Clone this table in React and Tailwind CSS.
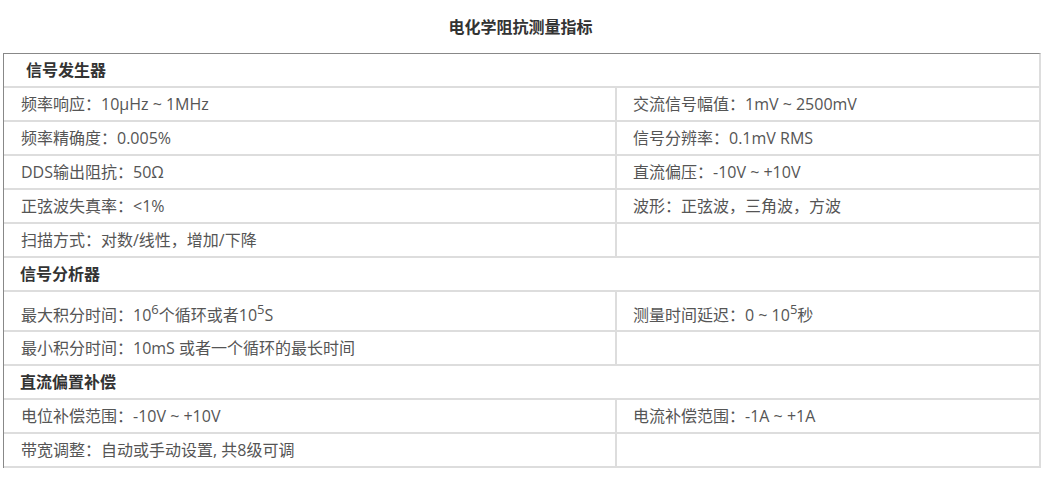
const font = { fontFamily: "'Open Sans', 'Noto Sans CJK SC', sans-serif" };

const rows = [
  { head: "信号发生器", indent: true },
  { left: "频率响应：10μHz ~ 1MHz", right: "交流信号幅值：1mV ~ 2500mV" },
  { left: "频率精确度：0.005%", right: "信号分辨率：0.1mV RMS" },
  { left: "DDS输出阻抗：50Ω", right: "直流偏压：-10V ~ +10V" },
  { left: "正弦波失真率：<1%", right: "波形：正弦波，三角波，方波" },
  { left: "扫描方式：对数/线性，增加/下降", right: "" },
  { head: "信号分析器" },
  {
    left: (
      <>
        最大积分时间：10<sup className="text-[13px]">6</sup>个循环或者10<sup className="text-[13px]">5</sup>S
      </>
    ),
    right: (
      <>
        测量时间延迟：0 ~ 10<sup className="text-[13px]">5</sup>秒
      </>
    ),
    tall: true,
  },
  { left: "最小积分时间：10mS 或者一个循环的最长时间", right: "" },
  { head: "直流偏置补偿" },
  { left: "电位补偿范围：-10V ~ +10V", right: "电流补偿范围：-1A ~ +1A" },
  { left: "带宽调整：自动或手动设置, 共8级可调", right: "" },
];

export default function App() {
  return (
    <div className="w-[1049px] h-[484px] bg-white overflow-hidden" style={font}>
      <div className="h-[53px] w-[1041px] flex items-center justify-center">
        <h1 className="text-[16px] font-bold text-[#333]">电化学阻抗测量指标</h1>
      </div>
      <div className="ml-[3px] w-[1038px] border-t border-l border-[#888] border-r-2 border-r-[#ddd]">
        {rows.map((r, i) =>
          r.head ? (
            <div
              key={i}
              className={`h-[34px] border-b-2 border-[#ddd] flex items-center text-[16px] font-bold text-[#333] ${
                r.indent ? "pl-[22px]" : "pl-[16px]"
              }`}
            >
              {r.head}
            </div>
          ) : (
            <div
              key={i}
              className={`flex border-b-2 border-[#ddd] text-[16px] text-[#555] ${
                r.tall ? "h-[40px]" : "h-[34px]"
              }`}
            >
              <div
                className={`w-[613px] pl-[17px] flex items-center border-r-2 border-[#ddd] whitespace-nowrap ${
                  r.tall ? "pt-[8px]" : ""
                }`}
              >
                {r.left}
              </div>
              <div className={`flex-1 pl-[16px] flex items-center whitespace-nowrap ${r.tall ? "pt-[8px]" : ""}`}>
                {r.right}
              </div>
            </div>
          )
        )}
      </div>
    </div>
  );
}
